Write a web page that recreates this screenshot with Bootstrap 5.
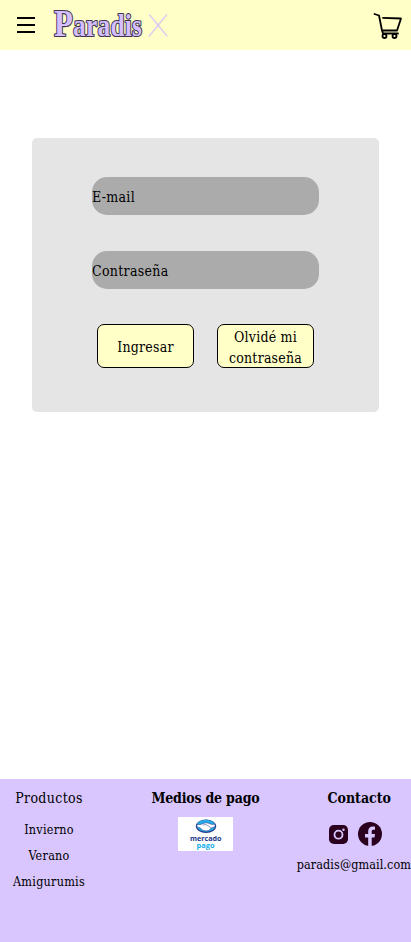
<!DOCTYPE html>
<html lang="es">
<head>
<meta charset="utf-8">
<meta name="viewport" content="width=device-width, initial-scale=1">
<title>Paradis X</title>
<link href="https://cdn.jsdelivr.net/npm/bootstrap@5.3.0/dist/css/bootstrap.min.css" rel="stylesheet">
<style>
body{font-family:"DejaVu Serif Condensed","DejaVu Serif","Liberation Serif",serif;font-stretch:condensed;color:#000;font-size:14px;line-height:21px}
svg{display:block;flex:none;font-stretch:normal}
.topbar{background:#ffffc7;height:50px;padding:0 8px 0 16px}
.brand-art{margin-left:16px}
.login-main{padding:88px 32px 0}
.login-panel{background:#e5e5e5;height:274px;border-radius:5px;padding:39px 60px 0}
.login-panel .field{height:38px;background:#ababab;border:0;border-radius:15px;padding:1px 0 0;font-size:14px;letter-spacing:.3px;color:#000;margin-bottom:36px;box-shadow:none}
.field::placeholder{color:#000;opacity:1}
.actions{gap:23px;margin-top:-1px}
.action{width:97px;height:44px;background:#ffffc7;border:1px solid #000;border-radius:7px;padding:2px 0 0;font-size:14px;letter-spacing:.22px;line-height:21px;color:#000}
.site-footer{background:#d9c6ff;height:163px;padding-top:8px}
.col-products{width:98px}
.col-pay{width:215px}
.col-contact{width:98px}
.foot-title{font-size:14px;line-height:22px}
.products-title{letter-spacing:.35px}
.pay-title{letter-spacing:-.2px}
.foot-link{font-size:12.5px;line-height:26px;letter-spacing:.25px;color:#000}
.products-list{margin-top:8px}
.pay-logo{margin-top:8px}
.contact-head{margin-right:20px}
.social{gap:10px;margin:13px 29px 0 0}
.mail{font-size:12.5px;line-height:20px;letter-spacing:.08px;margin-top:9px}
</style>
<script src="https://cdn.jsdelivr.net/npm/bootstrap@5.3.0/dist/js/bootstrap.bundle.min.js"></script>
</head>
<body class="d-flex flex-column min-vh-100">
<header class="topbar d-flex align-items-center">
<svg width="20" height="20" viewBox="0 0 20 20" stroke="#000" stroke-width="2"><path d="M1 3H19M1 10H19M1 17H19"/></svg>
<svg class="brand-art" width="122" height="50" viewBox="0 0 122 50">
<text transform="translate(2 36) scale(1 1.2)" textLength="88" font-family="Liberation Serif, serif" font-weight="700" font-size="25.5" fill="#d4beff" stroke="#3c354d" stroke-width="1.8" stroke-linejoin="round" paint-order="stroke"><tspan font-size="31">P</tspan>aradis</text>
<text x="96" y="36" textLength="20" lengthAdjust="spacingAndGlyphs" font-family="Lato, Inter, sans-serif" font-weight="100" font-size="29" fill="#dcc9f4" stroke="#dcc9f4" stroke-width=".8">X</text>
</svg>
<svg class="ms-auto" width="30" height="30" viewBox="0 0 30 30" fill="none" stroke="#000" stroke-width="1.8" stroke-linecap="round" stroke-linejoin="round"><path d="M1.5 4L6 5.5L9 20.5H24L28 8.5L10 7.8M9 20.5L10 23.5H25"/><circle cx="11.5" cy="26" r="2"/><circle cx="21.5" cy="26" r="2"/></svg>
</header>
<main class="login-main">
<form class="login-panel">
<input class="form-control field" type="email" placeholder="E-mail" aria-label="E-mail">
<input class="form-control field" type="password" placeholder="Contraseña" aria-label="Contraseña">
<div class="actions d-flex justify-content-center">
<button class="btn action" type="button">Ingresar</button>
<button class="btn action" type="button">Olvidé mi contraseña</button>
</div>
</form>
</main>
<footer class="site-footer d-flex mt-auto">
<div class="col-products text-center">
<div class="foot-title products-title">Productos</div>
<div class="products-list d-flex flex-column"><a class="foot-link text-decoration-none">Invierno</a><a class="foot-link text-decoration-none">Verano</a><a class="foot-link text-decoration-none">Amigurumis</a></div>
</div>
<div class="col-pay d-flex flex-column align-items-center">
<div class="foot-title pay-title fw-bold text-nowrap">Medios de pago</div>
<svg class="pay-logo" width="55" height="34" viewBox="0 0 55 34"><path fill="#fff" d="M0 0H55V34H0z"/><ellipse cx="28" cy="9.3" rx="10.2" ry="6.8" fill="#20378a"/><ellipse cx="28" cy="8.8" rx="9.4" ry="6" fill="#27a9e5"/><path d="M19 7.5Q23 8 25.5 6.5Q28 5 30.5 6.3Q33 8 37 7.2L37 9.5L33.5 11Q30 15 27.5 13.8Q24 14 22.5 11L19 9.8z" fill="#fff" stroke="#20378a" stroke-width=".5"/><path d="M25 8L28 7.5L33.5 11" fill="none" stroke="#20378a" stroke-width=".5"/><text x="12" y="24" textLength="31.5" lengthAdjust="spacingAndGlyphs" font-family="Open Sans, sans-serif" font-weight="700" font-size="7.5" fill="#20378a">mercado</text><text x="18.5" y="30.5" textLength="18" lengthAdjust="spacingAndGlyphs" font-family="Open Sans, sans-serif" font-weight="700" font-size="7.5" fill="#12aeea">pago</text></svg>
</div>
<div class="col-contact d-flex flex-column align-items-end">
<div class="foot-title fw-bold contact-head">Contacto</div>
<div class="social d-flex align-items-center">
<svg width="19" height="19" viewBox="0 0 19 19"><rect width="19" height="19" rx="4.8" fill="#2b001e"/><circle cx="9.5" cy="9.7" r="4" fill="none" stroke="#d9c6ff" stroke-width="1.8"/><circle cx="14.5" cy="4.7" r="1.2" fill="#d9c6ff"/></svg>
<svg width="24" height="24" viewBox="0 0 24 24"><circle cx="12" cy="12" r="12" fill="#2b001e"/><path d="M10.2 24V15.5H7V12H10.2V9.2C10.2 6.1 12 4.5 14.8 4.5C16 4.5 17 4.7 17 4.7V7.8H15.4C14 7.8 13.7 8.6 13.7 9.6V12H17L16.5 15.5H13.7V24z" fill="#d9c6ff"/></svg>
</div>
<div class="mail">paradis@gmail.com</div>
</div>
</footer>
</body>
</html>
